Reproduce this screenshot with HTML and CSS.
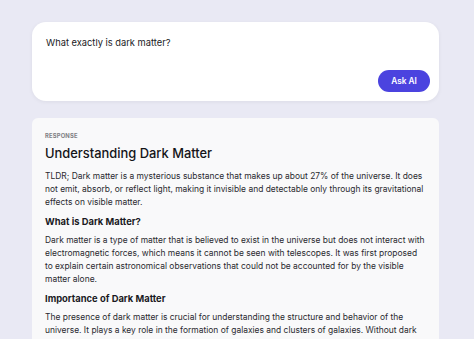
FILE: index.html
```html
<!DOCTYPE html>
<html lang="en">
<head>
    <title>Ask AI</title>
    <link rel="stylesheet" href="styles.css">
</head>
<body>
    <div class="page">
        <div class="ask-box">
            <div class="question">What exactly is dark matter?</div>
            <div class="actions">
                <button class="button">Ask AI</button>
            </div>
        </div>

        <div class="response">
            <div class="label">RESPONSE</div>
            <h1>Understanding Dark Matter</h1>
            <p>TLDR; Dark matter is a mysterious substance that makes up about 27% of the universe. It does not emit, absorb, or reflect light, making it invisible and detectable only through its gravitational effects on visible matter.</p>
            <h2>What is Dark Matter?</h2>
            <p>Dark matter is a type of matter that is believed to exist in the universe but does not interact with electromagnetic forces, which means it cannot be seen with telescopes. It was first proposed to explain certain astronomical observations that could not be accounted for by the visible matter alone.</p>
            <h2>Importance of Dark Matter</h2>
            <p>The presence of dark matter is crucial for understanding the structure and behavior of the universe. It plays a key role in the formation of galaxies and clusters of galaxies. Without dark matter, galaxies would not have enough mass to hold together.</p>
        </div>
    </div>
</body>
</html>
```

FILE: styles.css
```css
body {
    font-family: 'Inter', sans-serif;
    margin: 0;
    padding: 0;
    background: #e9e9f4;
    color: #1d1d22;
    overflow: hidden;
}
.page {
    width: 407px;
    margin: 22px 0 0 32px;
    display: flex;
    flex-direction: column;
    gap: 17px;
}
.ask-box {
    background: #fff;
    border-radius: 14px;
    box-shadow: 0 1px 4px rgba(0, 0, 0, 0.06);
    padding: 14px 9px 9px 14px;
    height: 79px;
    box-sizing: border-box;
    display: flex;
    flex-direction: column;
    justify-content: space-between;
}
.question {
    font-size: 9.3px;
    line-height: 14px;
    color: #1a1a1e;
}
.actions {
    display: flex;
    justify-content: flex-end;
}
.button {
    font-family: 'Inter', sans-serif;
    background: #4b43df;
    color: white;
    border: none;
    width: 52px;
    height: 22px;
    border-radius: 11px;
    font-size: 8.3px;
    font-weight: 600;
    padding: 0;
    cursor: pointer;
}
.response {
    background: #f9f9fa;
    border-radius: 6px;
    padding: 13px 13px 13px 13px;
}
.label {
    font-size: 5.8px;
    font-weight: 700;
    color: #808084;
    letter-spacing: 0.2px;
    line-height: 9px;
}
h1 {
    font-size: 12.9px;
    font-weight: 500;
    margin: 3px 0 6px;
    line-height: 21px;
    color: #141418;
}
p {
    font-size: 8.45px;
    line-height: 13px;
    margin: 0 0 6px;
    color: #2a2a30;
}
h2 {
    font-size: 9.4px;
    font-weight: 700;
    margin: 0 0 5px;
    line-height: 14px;
    color: #1a1a1f;
}
```
